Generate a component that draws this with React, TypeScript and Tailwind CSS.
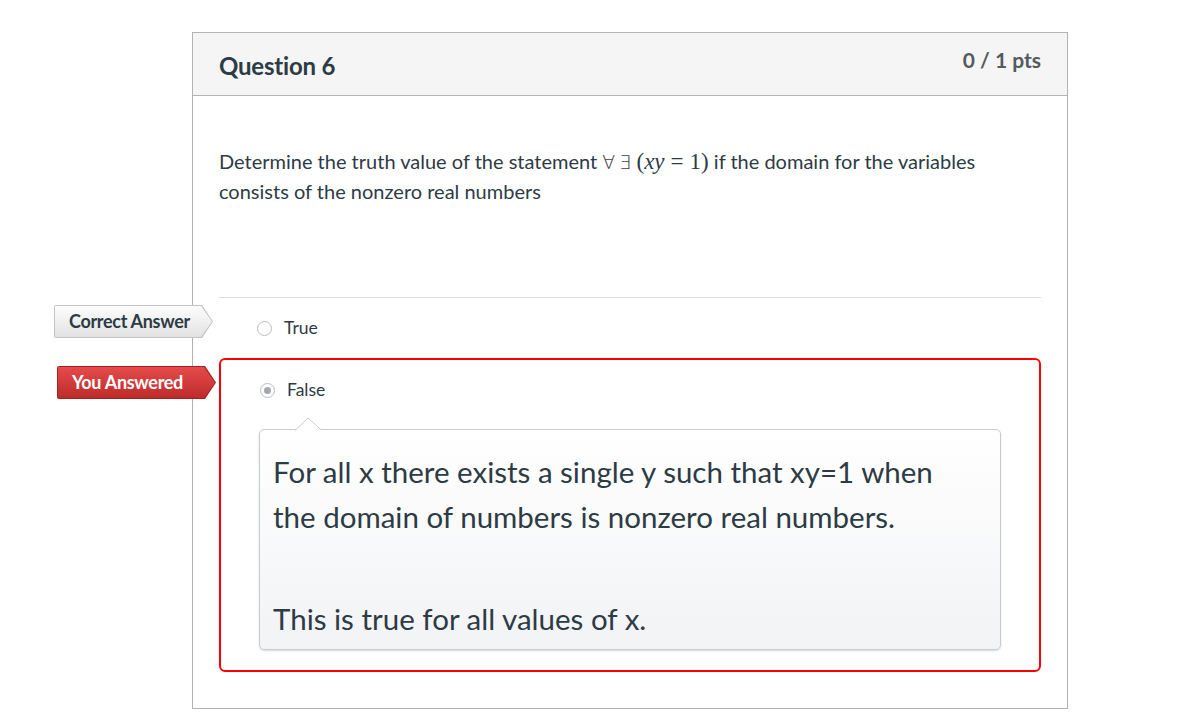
import React from 'react';

const lato = { fontFamily: 'Lato, "Open Sans", Arial, sans-serif' };

function Tag({ label, tone }: { label: string; tone: 'gray' | 'red' }) {
  const outer = tone === 'red' ? 'bg-[#a51f1f]' : 'bg-[#c4c4c4]';
  const inner =
    tone === 'red'
      ? 'bg-gradient-to-b from-[#e54b4b] to-[#bd2b2b] text-white'
      : 'bg-gradient-to-b from-[#fdfdfd] to-[#e2e2e2] text-[#2d3b45]';
  return (
    <div
      className={`relative h-[33px] w-[159px] ${outer} [clip-path:polygon(0_0,148px_0,159px_50%,148px_100%,0_100%)] rounded-l-[2px]`}
    >
      <div
        className={`absolute inset-[1px] flex items-center pl-[14px] text-[18px] font-bold tracking-[-0.3px] ${inner} [clip-path:polygon(0_0,146px_0,157px_50%,146px_100%,0_100%)]`}
      >
        {label}
      </div>
    </div>
  );
}

function Radio({ checked }: { checked?: boolean }) {
  return (
    <span className="flex h-[15px] w-[15px] shrink-0 items-center justify-center rounded-full border border-[#b9bcc0] bg-white">
      {checked && <span className="h-[7px] w-[7px] rounded-full bg-[#a4a7ad]" />}
    </span>
  );
}

export default function App() {
  return (
    <div className="min-h-[712px] bg-white pl-[192px] pt-[32px] text-[#2d3b45]" style={lato}>
      <div className="w-[876px] border border-[#b3b3b3]">
        <div className="flex h-[63px] items-start justify-between border-b border-[#b3b3b3] bg-[#f5f5f5] pl-[26px] pr-[26px]">
          <h2 className="mt-[16px] text-[24px] font-bold leading-[34px] tracking-[-0.2px]">Question 6</h2>
          <div className="mt-[13px] text-[21px] font-bold leading-[28px] text-[#555a5e]">0 / 1 pts</div>
        </div>

        <div className="px-[26px] pt-[50px]">
          <p className="text-[20px] leading-[30px]">
            Determine the truth value of the statement{' '}
            <span
              className="text-[19px] leading-none text-[#3d3d3d]"
              style={{ fontFamily: '"DejaVu Sans", sans-serif', fontWeight: 300 }}
            >
              ∀<span className="ml-[4px]">∃</span>
            </span>{' '}
            <span className="text-[23px] leading-none" style={{ fontFamily: '"Liberation Serif", serif' }}>
              (<i>xy</i>
              <span className="mx-[6px]">=</span>1)
            </span>{' '}
            if the domain for the variables consists of the nonzero real numbers
          </p>

          <div className="mt-[91px] border-t border-[#dddddd]" />

          <div className="relative flex h-[60px] items-center gap-[12px] pl-[38px]">
            <div className="absolute left-[-165px] top-[7px]">
              <Tag label="Correct Answer" tone="gray" />
            </div>
            <Radio />
            <span className="text-[17.5px]">True</span>
          </div>

          <div className="relative rounded-[6px] border-2 border-[#ff0000] px-[38px] pb-[20px]">
            <div className="absolute left-[-164px] top-[6px]">
              <Tag label="You Answered" tone="red" />
            </div>
            <div className="flex h-[60px] items-center gap-[12px] pl-px">
              <Radio checked />
              <span className="text-[17.5px]">False</span>
            </div>

            <div className="relative mt-[9px] rounded-[5px] border border-[#c7cdd1] bg-gradient-to-b from-white to-[#f2f3f5] px-[13px] pb-[8px] pt-[19px] shadow-[0_1px_2px_rgba(0,0,0,0.15)]">
              <svg
                className="absolute left-[35px] top-[-13px]"
                width="28"
                height="14"
                viewBox="0 0 28 14"
              >
                <path d="M0 13.5 L13 1 L27 13.5" fill="#ffffff" stroke="#c7cdd1" strokeWidth="1" />
                <rect x="1" y="13" width="26" height="2" fill="#ffffff" />
              </svg>
              <p className="pr-[40px] text-[29.5px] leading-[45px]">
                For all x there exists a single y such that xy=1 when the domain of numbers is nonzero real numbers.
              </p>
              <p className="mt-[57px] text-[29.5px] leading-[45px]">This is true for all values of x.</p>
            </div>
          </div>

          <div className="h-[36px]" />
        </div>
      </div>
    </div>
  );
}
